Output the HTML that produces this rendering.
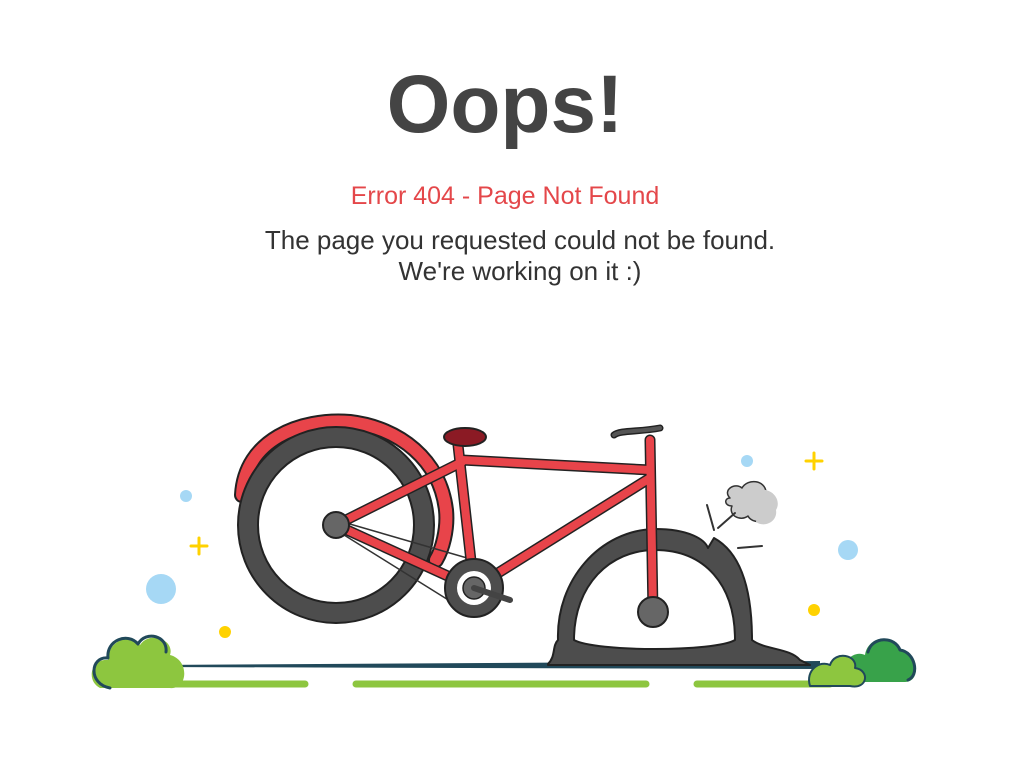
<!DOCTYPE html>
<html><head><meta charset="utf-8"><style>
html,body{margin:0;padding:0;background:#fff;width:1024px;height:768px;overflow:hidden;font-family:"Liberation Sans",sans-serif}
.t{position:absolute;left:0;width:1010px;text-align:center}
</style></head><body>
<div class="t" style="top:58px;font-size:82px;font-weight:bold;color:#444;">Oops!</div>
<div class="t" style="top:182px;font-size:25px;color:#e4474a;">Error 404 - Page Not Found</div>
<div class="t" style="top:225px;font-size:26px;color:#333;line-height:31px;width:1040px">The page you requested could not be found.<br>We're working on it :)</div>
<svg width="1024" height="768" style="position:absolute;left:0;top:0" stroke-linejoin="round" stroke-linecap="round">
<polygon points="150,665 820,661 820,669 150,667" fill="#21495a"/>
<g stroke="#8dc63f" stroke-width="7">
<line x1="158" y1="684" x2="305" y2="684"/><line x1="356" y1="684" x2="646" y2="684"/><line x1="697" y1="684" x2="830" y2="684"/>
</g>
<circle cx="186" cy="496" r="6" fill="#a6d8f5"/><circle cx="161" cy="589" r="15" fill="#a6d8f5"/>
<circle cx="225" cy="632" r="6" fill="#ffd200"/><circle cx="747" cy="461" r="6" fill="#a6d8f5"/>
<circle cx="848" cy="550" r="10" fill="#a6d8f5"/><circle cx="814" cy="610" r="6" fill="#ffd200"/>
<g stroke="#ffd200" stroke-width="3"><line x1="199" y1="538" x2="199" y2="554"/><line x1="191" y1="546" x2="207" y2="546"/><line x1="814" y1="453" x2="814" y2="469"/><line x1="806" y1="461" x2="822" y2="461"/></g>
<path d="M100,688 C85,680 92,658 108,660 C108,640 130,633 140,645 C150,630 175,640 170,655 C190,660 188,690 170,688 Z" fill="#8dc63f"/>
<path d="M110,688 C88,684 90,656 108,658 C106,640 128,632 138,644 C146,630 168,636 166,652" fill="none" stroke="#21495a" stroke-width="3"/>
<path d="M840,682 C840,660 855,650 865,655 C868,635 895,633 900,650 C918,652 922,682 905,682 Z" fill="#38a24a"/>
<path d="M868,652 C872,636 895,636 900,650 C915,652 920,675 908,680" fill="none" stroke="#21495a" stroke-width="3"/>
<path d="M810,686 C805,670 820,660 830,665 C835,650 858,655 855,668 C870,670 868,690 850,686 Z" fill="#8dc63f" stroke="#21495a" stroke-width="2"/>
<!-- flat front tire -->
<path d="M548,664 C556,656 552,646 558,640 C556,580 600,530 655,529 C690,529 705,540 708,548 L714,538 C745,555 752,600 752,640 C765,650 790,648 800,660 L810,665 L548,665 Z" fill="#4d4d4d" stroke="#222" stroke-width="2"/>
<path d="M574,640 C574,585 610,550 655,550 C705,550 735,585 735,640 C715,652 595,652 574,640 Z" fill="#fff" stroke="#222" stroke-width="2"/>
<!-- puff -->
<path d="M730,498 C722,490 735,482 742,488 C748,478 765,480 766,492 C778,492 778,510 768,512 C768,524 752,524 748,516 C740,522 728,515 732,506 C724,506 724,498 730,498Z" fill="#ccc" stroke="#333" stroke-width="1.5"/>
<path d="M760,490 C772,488 782,500 776,510 C778,522 764,528 756,522" fill="#ccc"/>
<g stroke="#333" stroke-width="2"><line x1="707" y1="505" x2="714" y2="530"/><line x1="738" y1="548" x2="762" y2="546"/><line x1="718" y1="528" x2="735" y2="513"/></g>
<!-- rear fender -->
<path d="M242,495 C245,440 300,418 350,422 C400,428 440,460 446,510 C448,530 442,550 436,560" fill="none" stroke="#222" stroke-width="16"/>
<path d="M242,495 C245,440 300,418 350,422 C400,428 440,460 446,510 C448,530 442,550 436,560" fill="none" stroke="#e8444a" stroke-width="12"/>
<circle cx="336" cy="525" r="88" fill="none" stroke="#222" stroke-width="22"/>
<circle cx="336" cy="525" r="88" fill="none" stroke="#4d4d4d" stroke-width="18"/>
<g stroke="#333" stroke-width="1.5"><line x1="336" y1="520" x2="474" y2="560"/><line x1="336" y1="530" x2="474" y2="616"/></g>
<g stroke="#222" stroke-width="11" fill="none">
<line x1="336" y1="525" x2="462" y2="462"/><line x1="336" y1="525" x2="474" y2="588"/>
<line x1="458" y1="445" x2="474" y2="588"/><line x1="462" y1="460" x2="650" y2="470"/>
<line x1="650" y1="478" x2="474" y2="588"/><line x1="650" y1="440" x2="653" y2="612"/></g>
<g stroke="#e8444a" stroke-width="8" fill="none">
<line x1="336" y1="525" x2="462" y2="462"/><line x1="336" y1="525" x2="474" y2="588"/>
<line x1="458" y1="445" x2="474" y2="588"/><line x1="462" y1="460" x2="650" y2="470"/>
<line x1="650" y1="478" x2="474" y2="588"/><line x1="650" y1="440" x2="653" y2="612"/></g>
<ellipse cx="465" cy="437" rx="21" ry="9" fill="#8b1a24" stroke="#222" stroke-width="2"/>
<path d="M614,435 C620,430 640,432 660,428" fill="none" stroke="#222" stroke-width="7"/>
<path d="M614,435 C620,430 640,432 660,428" fill="none" stroke="#555" stroke-width="4"/>
<circle cx="336" cy="525" r="13" fill="#666" stroke="#222" stroke-width="2"/>
<circle cx="653" cy="612" r="15" fill="#666" stroke="#222" stroke-width="2"/>
<circle cx="474" cy="588" r="29" fill="#4d4d4d" stroke="#222" stroke-width="2"/>
<circle cx="474" cy="588" r="17" fill="#fff"/>
<circle cx="474" cy="588" r="11" fill="#666" stroke="#222" stroke-width="1.5"/>
<line x1="474" y1="588" x2="510" y2="600" stroke="#444" stroke-width="6"/>
</svg>
</body></html>
